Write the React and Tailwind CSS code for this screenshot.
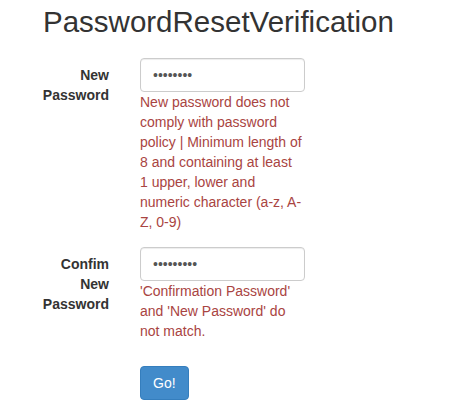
import React from "react";

const font = { fontFamily: '"Liberation Sans", Arial, sans-serif' };

function Row({ label, value, lines }) {
  return (
    <div className="flex items-start">
      <label className="ml-[30px] w-[79px] pt-[7px] text-right text-[14px] leading-[20px] font-bold text-[#333]">
        {label}
      </label>
      <div className="ml-[31px] w-[165px]">
        <input
          type="password"
          defaultValue={value}
          readOnly
          className="block h-[34px] w-full rounded-[4px] border border-[#ccc] bg-white px-[12px] py-[6px] text-[14px] leading-[20px] text-[#555] shadow-[inset_0_1px_1px_rgba(0,0,0,0.075)] outline-none"
          style={font}
        />
        <div className="text-[14px] leading-[20px] text-[#a94442] whitespace-nowrap">
          {lines.map((l, i) => (
            <div key={i}>{l}</div>
          ))}
        </div>
      </div>
    </div>
  );
}

export default function App() {
  return (
    <div className="min-h-[419px] w-[475px] bg-white pt-[6px] text-[#333]" style={font}>
      <h2 className="ml-[43px] text-[29.5px] leading-[32px] font-normal text-[#333]">
        PasswordResetVerification
      </h2>
      <div className="mt-[20px]">
        <Row
          label="New Password"
          value="abcdefgh"
          lines={[
            "New password does not",
            "comply with password",
            "policy | Minimum length of",
            "8 and containing at least",
            "1 upper, lower and",
            "numeric character (a-z, A-",
            "Z, 0-9)",
          ]}
        />
        <div className="mt-[15px]">
          <Row
            label="Confim New Password"
            value="abcdefghi"
            lines={[
              "'Confirmation Password'",
              "and 'New Password' do",
              "not match.",
            ]}
          />
        </div>
        <div className="ml-[140px] mt-[25px]">
          <button className="h-[34px] rounded-[4px] border border-[#357ebd] bg-[#428bca] px-[12px] text-[14px] leading-[20px] text-white">
            Go!
          </button>
        </div>
      </div>
    </div>
  );
}
